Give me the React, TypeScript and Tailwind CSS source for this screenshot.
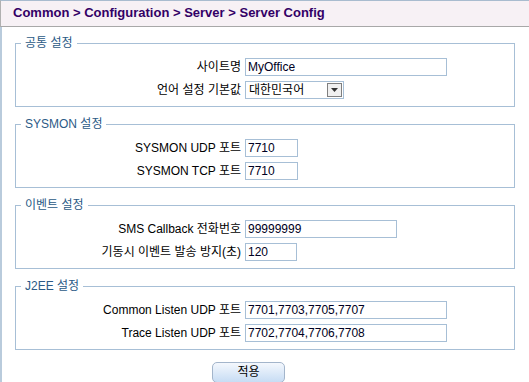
import React from "react";

const font = { fontFamily: '"Liberation Sans", "Noto Sans CJK KR", sans-serif' };

function Row({ label, children }: { label: string; children: React.ReactNode }) {
  return (
    <div className="flex items-center h-[18px]">
      <div className="w-[229px] text-right pr-1 text-[12px] leading-[18px] text-black whitespace-nowrap">{label}</div>
      {children}
    </div>
  );
}

function Input({ value, w }: { value: string; w: string }) {
  return (
    <div className={`${w} h-[18px] border border-[#a7bfd6] bg-white px-[2px] text-[12px] leading-[16px] text-[#000022] whitespace-nowrap overflow-hidden`}>
      {value}
    </div>
  );
}

function Section({ title, children }: { title: string; children: React.ReactNode }) {
  return (
    <fieldset className="ml-[13px] w-[500px] border border-[#a7bfd6] pb-[7px] pt-[7px]">
      <legend className="ml-[5px] px-1 text-[12px] leading-[16px] text-[#2b5a86]">{title}</legend>
      <div className="flex flex-col gap-[5px]">{children}</div>
    </fieldset>
  );
}

export default function App() {
  return (
    <div className="w-[529px] h-[382px] bg-white overflow-hidden" style={font}>
      <div className="h-[27px] bg-[#f7f1f5] border-t border-[#a9bccf] border-b border-b-[#a8a8a8] border-l border-l-[#b0b0b0] pl-[12px] text-[13px] font-bold leading-[24px] text-[#330066]">
        Common &gt; Configuration &gt; Server &gt; Server Config
      </div>
      <div className="border-l-2 border-[#b9cbdc] h-[355px] pt-[8px] flex flex-col gap-[9px]">
        <Section title="공통 설정">
          <Row label="사이트명">
            <Input value="MyOffice" w="w-[202px]" />
          </Row>
          <Row label="언어 설정 기본값">
            <div className="w-[99px] h-[18px] border border-[#a7bfd6] bg-white flex items-center justify-between">
              <span className="pl-[3px] text-[12px] leading-[16px] text-black">대한민국어</span>
              <div className="w-[15px] h-[14px] mr-[1px] border border-[#7f7f7f] bg-[#f0f0f0] flex items-center justify-center">
                <svg width="7" height="4" viewBox="0 0 7 4"><path d="M0 0H7L3.5 4Z" fill="#333" /></svg>
              </div>
            </div>
          </Row>
        </Section>
        <Section title="SYSMON 설정">
          <Row label="SYSMON UDP 포트">
            <Input value="7710" w="w-[53px]" />
          </Row>
          <Row label="SYSMON TCP 포트">
            <Input value="7710" w="w-[53px]" />
          </Row>
        </Section>
        <Section title="이벤트 설정">
          <Row label="SMS Callback 전화번호">
            <Input value="99999999" w="w-[152px]" />
          </Row>
          <Row label="기동시 이벤트 발송 방지(초)">
            <Input value="120" w="w-[52px]" />
          </Row>
        </Section>
        <Section title="J2EE 설정">
          <Row label="Common Listen UDP 포트">
            <Input value="7701,7703,7705,7707" w="w-[202px]" />
          </Row>
          <Row label="Trace Listen UDP 포트">
            <Input value="7702,7704,7706,7708" w="w-[202px]" />
          </Row>
        </Section>
        <div className="ml-[210px]">
          <button className="w-[73px] h-[21px] rounded-[5px] border border-[#a3b5cb] bg-gradient-to-b from-[#f4f8fd] to-[#c7dcf4] text-[12px] leading-[18px] text-black">
            적용
          </button>
        </div>
      </div>
    </div>
  );
}
